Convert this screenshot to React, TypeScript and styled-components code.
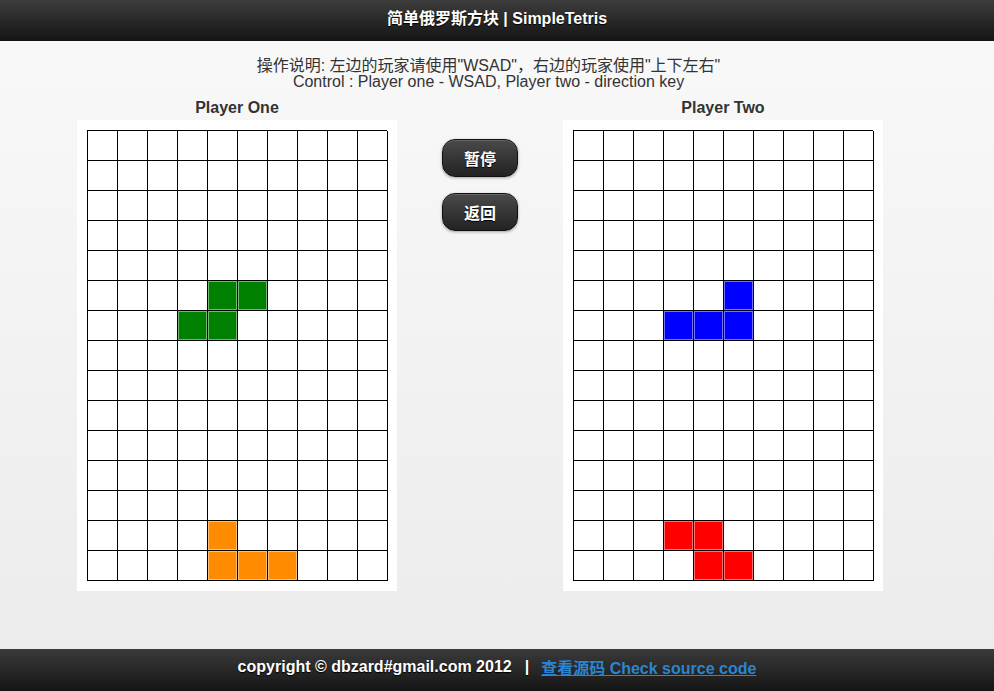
import React from 'react';
import styled, { createGlobalStyle } from 'styled-components';

type Color = 'green' | 'orange' | 'blue' | 'red' | null;

const ROWS = 15;
const COLS = 10;

const fills: Record<string, string> = {
  green: '#008000',
  orange: '#ff8c00',
  blue: '#0000ff',
  red: '#ff0000',
};

function makeBoard(cells: [number, number, Color][]): Color[][] {
  const board: Color[][] = Array.from({ length: ROWS }, () => Array(COLS).fill(null));
  cells.forEach(([r, c, color]) => {
    board[r][c] = color;
  });
  return board;
}

const playerOne = makeBoard([
  [5, 4, 'green'],
  [5, 5, 'green'],
  [6, 3, 'green'],
  [6, 4, 'green'],
  [13, 4, 'orange'],
  [14, 4, 'orange'],
  [14, 5, 'orange'],
  [14, 6, 'orange'],
]);

const playerTwo = makeBoard([
  [5, 5, 'blue'],
  [6, 3, 'blue'],
  [6, 4, 'blue'],
  [6, 5, 'blue'],
  [13, 3, 'red'],
  [13, 4, 'red'],
  [14, 4, 'red'],
  [14, 5, 'red'],
]);

const GlobalStyle = createGlobalStyle`
  html, body {
    margin: 0;
    padding: 0;
  }
  body {
    font-family: "Liberation Sans", "Noto Sans CJK SC", Arial, sans-serif;
    color: #333;
    background: linear-gradient(#f9f9f9, #ebebeb);
    min-height: 100vh;
  }
`;

function Board({ title, board }: { title: string; board: Color[][] }) {
  return (
    <PlayerColumn>
      <PlayerTitle>{title}</PlayerTitle>
      <Panel>
        <Grid>
          {board.map((row, r) =>
            row.map((cell, c) => <Cell key={`${r}-${c}`} $fill={cell} />)
          )}
        </Grid>
      </Panel>
    </PlayerColumn>
  );
}

export default function App() {
  return (
    <Page>
      <GlobalStyle />
      <Header>简单俄罗斯方块 | SimpleTetris</Header>
      <Main>
        <Instructions>
          <div>操作说明: 左边的玩家请使用"WSAD"，右边的玩家使用"上下左右"</div>
          <div>Control : Player one - WSAD, Player two - direction key</div>
        </Instructions>
        <Arena>
          <Board title="Player One" board={playerOne} />
          <Controls>
            <DarkButton>暂停</DarkButton>
            <DarkButton>返回</DarkButton>
          </Controls>
          <Board title="Player Two" board={playerTwo} />
        </Arena>
      </Main>
      <Footer>
        copyright © dbzard#gmail.com 2012
        <Divider>|</Divider>
        <SourceLink href="#">查看源码 Check source code</SourceLink>
      </Footer>
    </Page>
  );
}

const Page = styled.div`
  display: flex;
  flex-direction: column;
  min-height: 100vh;
`;

const Header = styled.header`
  height: 41px;
  line-height: 38px;
  text-align: center;
  color: #fff;
  font-weight: bold;
  font-size: 16px;
  background: linear-gradient(#3d3d3d, #141414);
  text-shadow: 0 1px 1px #000;
`;

const Main = styled.main`
  width: 806px;
  margin-left: calc(50% - 420px);
  padding-top: 17px;
`;

const Instructions = styled.div`
  text-align: center;
  font-size: 16px;
  line-height: 16px;
  color: #333;
  margin-left: 17px;
`;

const Arena = styled.div`
  display: flex;
  margin-top: 9px;
`;

const PlayerColumn = styled.div`
  display: flex;
  flex-direction: column;
  align-items: center;
  width: 320px;
`;

const PlayerTitle = styled.h3`
  margin: 0;
  font-size: 16px;
  line-height: 18px;
  font-weight: bold;
  color: #333;
  height: 21px;
`;

const Panel = styled.div`
  background: #fff;
  padding: 10px;
  width: 300px;
`;

const Grid = styled.div`
  display: grid;
  grid-template-columns: repeat(${COLS}, 30px);
  grid-auto-rows: 30px;
  border-left: 1px solid #000;
  border-top: 1px solid #000;
`;

const Cell = styled.div<{ $fill: Color }>`
  border-right: 1px solid #000;
  border-bottom: 1px solid #000;
  background: ${(p) => (p.$fill ? fills[p.$fill] : '#fff')};
  box-shadow: ${(p) => (p.$fill ? 'inset 0 0 0 1px rgba(255,255,255,0.45)' : 'none')};
`;

const Controls = styled.div`
  width: 166px;
  display: flex;
  flex-direction: column;
  align-items: center;
  gap: 16px;
  padding-top: 40px;
`;

const DarkButton = styled.button`
  width: 76px;
  height: 38px;
  border: 1px solid #111;
  border-radius: 13px;
  background: linear-gradient(#4a4a4a, #222);
  color: #fff;
  font-family: "Liberation Sans", "Noto Sans CJK SC", sans-serif;
  font-size: 16px;
  font-weight: bold;
  text-shadow: 0 1px 1px #000;
  box-shadow: 0 1px 3px rgba(0, 0, 0, 0.35), inset 0 1px 0 rgba(255, 255, 255, 0.15);
  cursor: pointer;
`;

const Footer = styled.footer`
  margin-top: auto;
  height: 42px;
  box-sizing: border-box;
  padding-bottom: 6px;
  display: flex;
  align-items: center;
  justify-content: center;
  color: #fff;
  font-weight: bold;
  font-size: 16px;
  background: linear-gradient(#3a3a3a, #151515);
  text-shadow: 0 1px 1px #000;
`;

const Divider = styled.span`
  margin: 0 12px 0 13px;
`;

const SourceLink = styled.a`
  color: #2b85d0;
  text-decoration: underline;
  text-shadow: none;
`;
